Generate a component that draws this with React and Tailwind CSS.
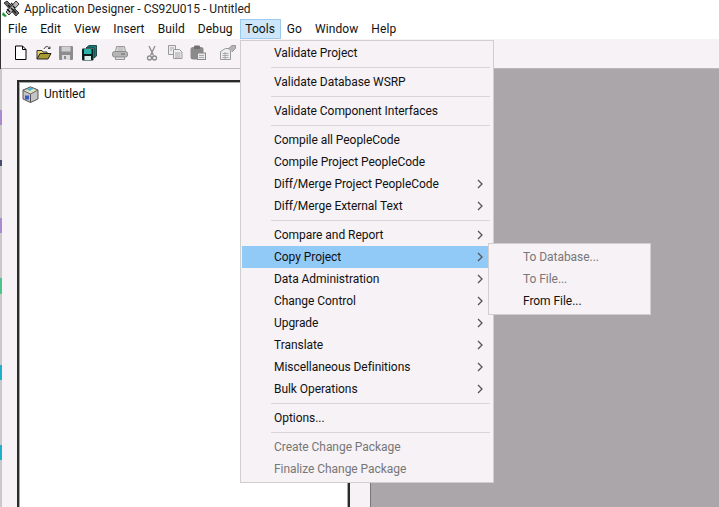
import React from 'react';

const Chevron = () => (
    <svg width="6" height="10" viewBox="0 0 6 10">
        <path d="M1 1l4 4-4 4" fill="none" stroke="#555" strokeWidth="1.3" />
    </svg>
);

const MenuRow = ({ label, sub, disabled, active }) => (
    <div className={`h-[22px] flex items-center justify-between pl-[32px] pr-[9px] tracking-[-0.05px] ${active ? 'bg-[#91c9f7]' : ''}`}>
        <span className={disabled ? 'text-[#777]' : 'text-[#111]'}>{label}</span>
        {sub && <Chevron />}
    </div>
);

const Sep = () => (
    <div className="h-[7px] flex items-center pl-[29px] pr-[2px]">
        <div className="h-px w-full bg-[#d7d7d7]" />
    </div>
);

const AppIcon = () => (
    <svg width="18" height="18" viewBox="0 0 18 18">
        <path d="M2 3l3-2 12 12-3 3z" fill="#6b6b6b" stroke="#111" strokeWidth=".8" />
        <path d="M4 12L14 1l3 3L7 15z" fill="#b8b8b8" stroke="#111" strokeWidth=".8" />
        <path d="M6 5l2 2M9 3l2 2M5 9l3 3M9 8l3 3M12 11l2 2M11 6l2 2" stroke="#111" strokeWidth="1.200" />
        <path d="M1 12l4 4-2 1-3-2z" fill="#1f9a35" />
    </svg>
);
const NewIcon = () => (
    <svg width="16" height="16" viewBox="0 0 16 16"><path d="M2.500 1h7l3.500 3.500V14.500H2.500z" fill="#fff" stroke="#000" /><path d="M9.500 1v3.500H13" fill="none" stroke="#000" /></svg>
);
const OpenIcon = () => (
    <svg width="16" height="16" viewBox="0 0 16 16"><path d="M1 14V5.500h5l1 1.500h4v2" fill="#e8d56a" stroke="#333" /><path d="M1 14l3-5.500h11L12 14z" fill="#a89a30" stroke="#222" /><path d="M8 4c1-2.500 3-3 4.500-2L14 3.500M14 1.500v2h-2" fill="none" stroke="#444" /></svg>
);
const SaveIcon = () => (
    <svg width="16" height="16" viewBox="0 0 16 16"><rect x="1" y="1" width="14" height="14" rx="1" fill="#8c8c8c" /><rect x="3.500" y="1.500" width="9" height="5" fill="#cfcfcf" /><rect x="4" y="10" width="8" height="5" fill="#dcdcdc" /><rect x="6" y="11" width="2" height="3" fill="#8c8c8c" /></svg>
);
const SaveAllIcon = () => (
    <svg width="16" height="16" viewBox="0 0 16 16"><path d="M5 3l3-2.500h7.500V11L13 13V3z" fill="#157a78" stroke="#0a2f2f" strokeWidth=".8" /><rect x="1" y="3.500" width="11.500" height="12" rx="1" fill="#0d1f1f" /><rect x="3" y="4" width="7.500" height="5" fill="#2bb5aa" /><rect x="3.500" y="11" width="6.500" height="4" fill="#d8f0ee" /></svg>
);
const PrintIcon = () => (
    <svg width="16" height="16" viewBox="0 0 16 16"><path d="M4.500 1.500h8l1 5h-10z" fill="#e2e2e2" stroke="#999" /><path d="M5.500 3h6M5.500 5h6" stroke="#aaa" /><rect x=".5" y="6.500" width="15" height="5.500" rx="2" fill="#b5b5b5" stroke="#8e8e8e" /><rect x="3.500" y="12" width="9" height="2.500" fill="#ddd" stroke="#999" /><path d="M9 9h4" stroke="#666" /></svg>
);
const CutIcon = () => (
    <svg width="16" height="16" viewBox="0 0 16 16"><path d="M5 1l4.500 9.500M11 1L6.500 10.500" stroke="#8c8c8c" strokeWidth="1.300" fill="none" /><circle cx="5.500" cy="13" r="2" fill="none" stroke="#8c8c8c" strokeWidth="1.300" /><circle cx="10.500" cy="13" r="2" fill="none" stroke="#8c8c8c" strokeWidth="1.300" /></svg>
);
const CopyIcon = () => (
    <svg width="16" height="16" viewBox="0 0 16 16"><path d="M1.500 .5h7v9h-7z" fill="#eee" stroke="#999" /><path d="M6.500 4.500h6l2.500 2.500v6.500H6.500z" fill="#eee" stroke="#999" /><path d="M8 8h5.500M8 10h5.500M8 12h5.500M3 3h4M3 5h2" stroke="#a5a5a5" /></svg>
);
const PasteIcon = () => (
    <svg width="16" height="16" viewBox="0 0 16 16"><rect x=".5" y="2" width="13" height="12.500" rx="2.500" fill="#8a8a8a" /><rect x="4" y=".5" width="6" height="3.500" rx="1" fill="#6f6f6f" /><rect x="7.500" y="8" width="8" height="6.500" fill="#e9e9e9" stroke="#888" /><path d="M9 10.500h5M9 12.500h5" stroke="#aaa" /></svg>
);
const PropsIcon = () => (
    <svg width="16" height="16" viewBox="0 0 16 16"><path d="M.5 6.500l5-3h5v11H.5z" fill="#eee" stroke="#999" /><path d="M2.500 8.500h6M2.500 10.500h6M2.500 12.500h6M5 7v7" stroke="#aaa" /><path d="M8 4l4-3.500h3.500v3L12 7" fill="#b5b5b5" stroke="#999" /></svg>
);
const ProjectIcon = () => (
    <svg width="17" height="17" viewBox="0 0 17 17">
        <path d="M8.500 1L16 4v9l-7.500 3.500L1 13V4z" fill="#c4c4c4" stroke="#555" />
        <path d="M1 4.500L8.500 8 16 4 8.500 1z" fill="#dfe3c0" stroke="#666" />
        <path d="M5 3.500l4-2 2.500 1.200-4 2.200z" fill="#3fb4d8" />
        <path d="M8.500 8v8.500" stroke="#555" />
        <rect x="3" y="9.500" width="4" height="4" fill="#3a5ac8" />
    </svg>
);

const TopMenu = ({ label, active }) => (
    <span className={active ? 'h-[20px] w-[41px] -ml-[6px] -mr-[7px] flex items-center justify-center bg-[#cde6f9] border border-[#9ccbef]' : 'pt-[1px]'}>{label}</span>
);

// bits of the window behind, showing at the far left edge
const EdgeStrip = () => (
    <div className="w-[2px] flex flex-col bg-[#c9c9c9]">
        <div className="h-[41px]" />
        <div className="h-[15px] bg-[#a98bd0]" />
        <div className="h-[35px]" />
        <div className="h-[6px] bg-[#46506e]" />
        <div className="h-[52px]" />
        <div className="h-[15px] bg-[#a98bd0]" />
        <div className="h-[45px]" />
        <div className="h-[16px] bg-[#4cc48a]" />
        <div className="h-[71px]" />
        <div className="h-[15px] bg-[#20aecb]" />
        <div className="h-[65px]" />
        <div className="h-[15px] bg-[#20aecb]" />
    </div>
);

const App = () => {
    return (
        <div className="relative w-[719px] h-[507px] overflow-hidden bg-white text-[12px] text-[#111]" style={{ fontFamily: "Roboto, sans-serif" }}>
            <div className="border-l border-[#333]">
                {/* title bar */}
                <div className="h-[18px] flex items-center pl-[1px] gap-[4px]">
                    <AppIcon />
                    <span className="text-[#222]">Application Designer - CS92U015 - Untitled</span>
                </div>

                {/* menu bar */}
                <div className="h-[21px] flex items-center pl-[7px] gap-[13px] tracking-[0.1px]">
                    {['File', 'Edit', 'View', 'Insert', 'Build', 'Debug'].map(m => <TopMenu key={m} label={m} />)}
                    <TopMenu label="Tools" active />
                    {['Go', 'Window', 'Help'].map(m => <TopMenu key={m} label={m} />)}
                </div>

                {/* toolbar */}
                <div className="h-[30px] flex items-center pl-[12px] pb-[1px] bg-[#f6f2f6] border-b border-b-[#b9b9b9]">
                    <NewIcon />
                    <div className="ml-[7px]"><OpenIcon /></div>
                    <div className="ml-[6px]"><SaveIcon /></div>
                    <div className="ml-[7px]"><SaveAllIcon /></div>
                    <div className="ml-[15px]"><PrintIcon /></div>
                    <div className="ml-[16px]"><CutIcon /></div>
                    <div className="ml-[7px]"><CopyIcon /></div>
                    <div className="ml-[7px]"><PasteIcon /></div>
                    <div className="ml-[14px]"><PropsIcon /></div>
                </div>
            </div>

            {/* workspace */}
            <div className="flex h-[438px]">
                <EdgeStrip />
                <div className="w-[368px] flex bg-[#f6f2f6] pl-[15px] pr-[20px] pt-[11px]">
                    <div className="flex-1 border-l-2 border-t-2 border-r-2 border-[#2a2a2a]">
                        <div className="h-full bg-white border-l border-t border-r border-[#a8a8a8] pt-[2px] pl-[2px]">
                            <div className="flex items-center gap-[5px]">
                                <ProjectIcon />
                                <span>Untitled</span>
                            </div>
                        </div>
                    </div>
                </div>
                <div className="flex-1 bg-[#aaa6aa] border-l border-[#777]" />
            </div>

            {/* tools menu */}
            <div className="absolute left-[240px] top-[40px] w-[254px] h-[443px] bg-[#f6f2f6] border border-[#cfcfcf] pt-[1px] px-[1px]">
                <MenuRow label="Validate Project" />
                <Sep />
                <MenuRow label="Validate Database WSRP" />
                <Sep />
                <MenuRow label="Validate Component Interfaces" />
                <Sep />
                <MenuRow label="Compile all PeopleCode" />
                <MenuRow label="Compile Project PeopleCode" />
                <MenuRow label="Diff/Merge Project PeopleCode" sub />
                <MenuRow label="Diff/Merge External Text" sub />
                <Sep />
                <MenuRow label="Compare and Report" sub />
                <MenuRow label="Copy Project" sub active />
                <MenuRow label="Data Administration" sub />
                <MenuRow label="Change Control" sub />
                <MenuRow label="Upgrade" sub />
                <MenuRow label="Translate" sub />
                <MenuRow label="Miscellaneous Definitions" sub />
                <MenuRow label="Bulk Operations" sub />
                <Sep />
                <MenuRow label="Options..." />
                <Sep />
                <MenuRow label="Create Change Package" disabled />
                <MenuRow label="Finalize Change Package" disabled />
            </div>

            {/* copy project submenu */}
            <div className="absolute left-[488px] top-[243px] w-[163px] h-[72px] bg-[#f6f2f6] border border-[#cfcfcf] pt-[2px] pl-[2px] pr-[1px]">
                <MenuRow label="To Database..." disabled />
                <MenuRow label="To File..." disabled />
                <MenuRow label="From File..." />
            </div>
        </div>
    );
};

export default App;
